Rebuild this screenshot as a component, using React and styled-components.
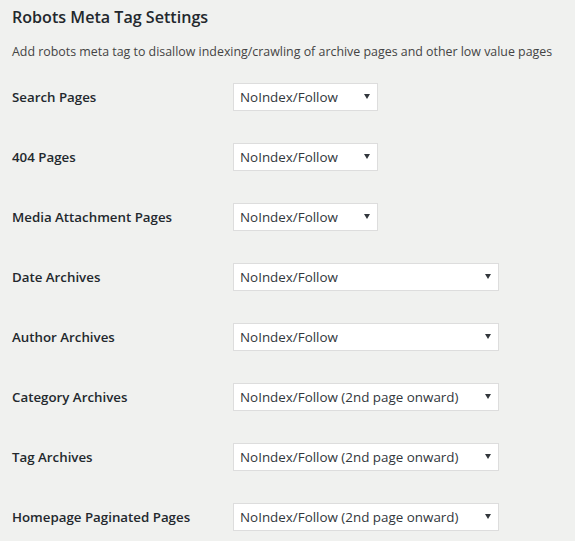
import styled, { createGlobalStyle } from 'styled-components';

const GlobalStyle = createGlobalStyle`
  html, body {
    margin: 0;
    padding: 0;
    background: #f0f1ef;
  }
  body {
    font-family: "Open Sans", "Noto Sans", sans-serif;
    color: #23282d;
  }
`;

const Page = styled.div`
  padding: 4px 12px 0;
  width: 575px;
  box-sizing: border-box;
`;

const Title = styled.h2`
  margin: 0;
  padding-top: 1px;
  font-size: 16.1px;
  line-height: 24px;
  font-weight: 600;
  color: #23282d;
`;

const Description = styled.p`
  margin: 14px 0 0;
  font-size: 12.4px;
  line-height: 18px;
  color: #444;
  white-space: nowrap;
`;

const Table = styled.div`
  display: grid;
  grid-template-columns: 221px 1fr;
  margin-top: 6px;
`;

const Row = styled.div`
  display: contents;
`;

const Label = styled.label`
  display: flex;
  align-items: center;
  height: 60px;
  font-size: 13.3px;
  font-weight: 600;
  color: #23282d;
`;

const Cell = styled.div`
  display: flex;
  align-items: center;
  height: 60px;
`;

const SelectWrap = styled.div`
  position: relative;
  width: ${(p) => (p.$wide ? '266px' : '145px')};
  height: 28px;

  &::after {
    content: '';
    position: absolute;
    right: 8px;
    top: 11px;
    border-left: 3.5px solid transparent;
    border-right: 3.5px solid transparent;
    border-top: 5px solid #32373c;
    pointer-events: none;
  }
`;

const Select = styled.select`
  appearance: none;
  -webkit-appearance: none;
  width: 100%;
  height: 100%;
  box-sizing: border-box;
  margin: 0;
  padding: 0 24px 0 6px;
  border: 1px solid #dddddd;
  border-radius: 0;
  background: #ffffff;
  color: #32373c;
  font-family: inherit;
  font-size: 13.4px;
  line-height: 26px;
  outline: none;
`;

const options = [
  'Index/Follow',
  'NoIndex/Follow',
  'NoIndex/Follow (2nd page onward)',
  'NoIndex/NoFollow',
];

const settings = [
  { label: 'Search Pages', value: 'NoIndex/Follow', wide: false },
  { label: '404 Pages', value: 'NoIndex/Follow', wide: false },
  { label: 'Media Attachment Pages', value: 'NoIndex/Follow', wide: false },
  { label: 'Date Archives', value: 'NoIndex/Follow', wide: true },
  { label: 'Author Archives', value: 'NoIndex/Follow', wide: true },
  { label: 'Category Archives', value: 'NoIndex/Follow (2nd page onward)', wide: true },
  { label: 'Tag Archives', value: 'NoIndex/Follow (2nd page onward)', wide: true },
  { label: 'Homepage Paginated Pages', value: 'NoIndex/Follow (2nd page onward)', wide: true },
];

function SettingRow({ label, value, wide }) {
  const opts = wide ? options : options.filter((o) => !o.includes('2nd'));
  return (
    <Row>
      <Label>{label}</Label>
      <Cell>
        <SelectWrap $wide={wide}>
          <Select defaultValue={value}>
            {opts.map((o) => (
              <option key={o} value={o}>
                {o}
              </option>
            ))}
          </Select>
        </SelectWrap>
      </Cell>
    </Row>
  );
}

export default function App() {
  return (
    <>
      <GlobalStyle />
      <Page>
        <Title>Robots Meta Tag Settings</Title>
        <Description>
          Add robots meta tag to disallow indexing/crawling of archive pages and other low value pages
        </Description>
        <Table>
          {settings.map((s) => (
            <SettingRow key={s.label} {...s} />
          ))}
        </Table>
      </Page>
    </>
  );
}
